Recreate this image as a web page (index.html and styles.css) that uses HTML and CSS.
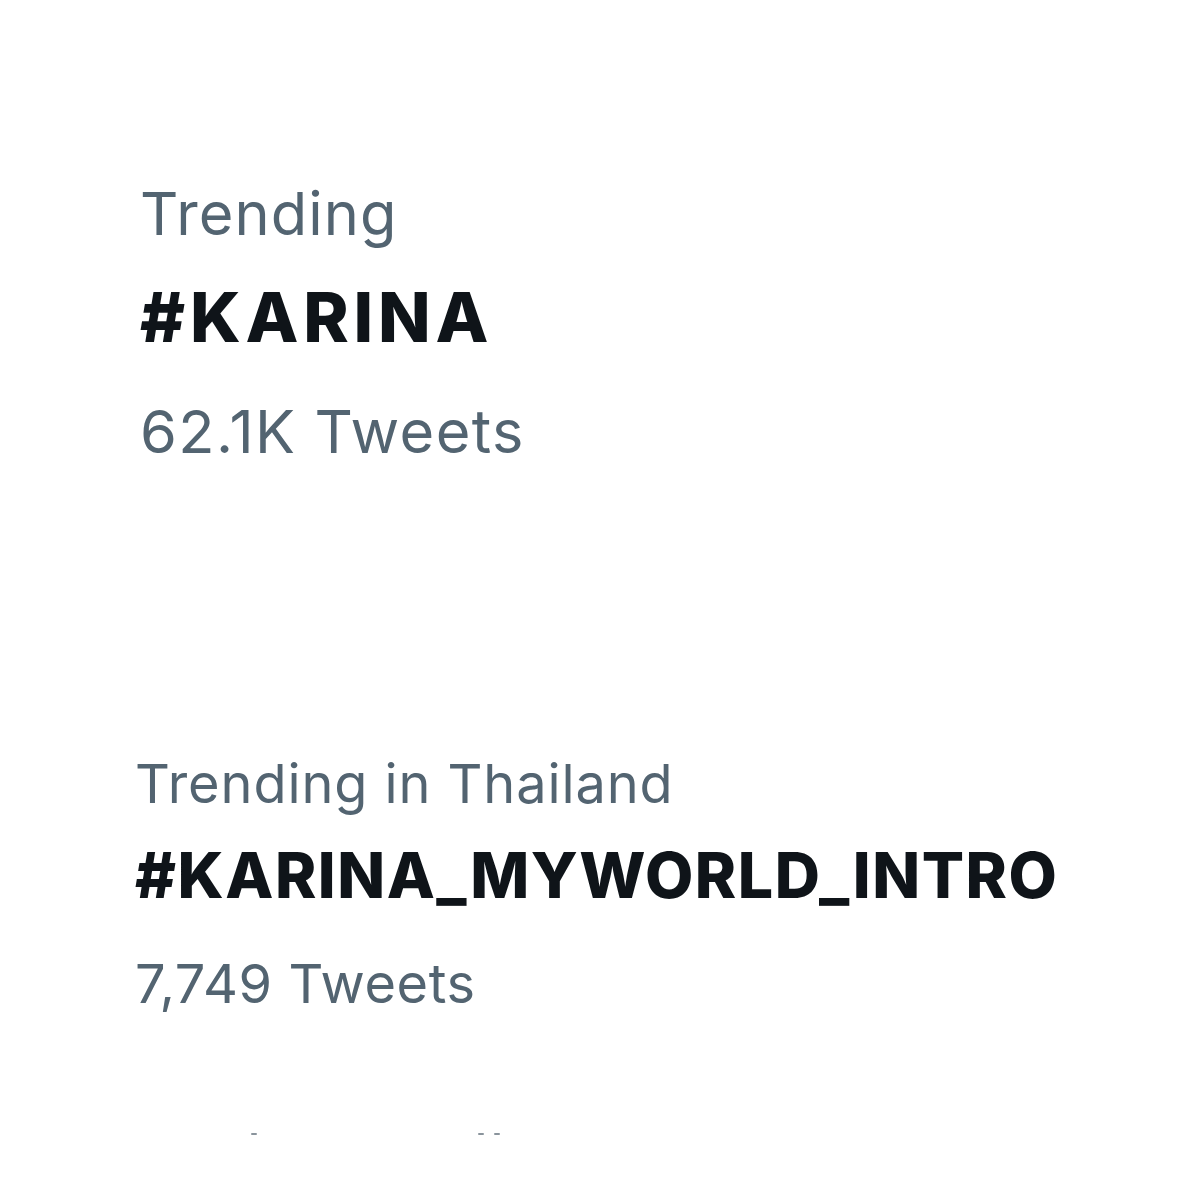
FILE: index.html
```html
<!DOCTYPE html>
<html lang="en">
<head>
	<meta charset="UTF-8">
	<title>Trends</title>
	<link rel="stylesheet" href="styles.css">
</head>
<body>
	<div class="trends">
		<div class="trend first">
			<div class="meta">Trending</div>
			<div class="name">#KARINA</div>
			<div class="count">62.1K Tweets</div>
		</div>
		<div class="trend second">
			<div class="meta">Trending in Thailand</div>
			<div class="name">#KARINA_MYWORLD_INTRO</div>
			<div class="count">7,749 Tweets</div>
		</div>
		<div class="cutoff">
			<span class="mark m1"></span>
			<span class="mark m2"></span>
			<span class="mark m3"></span>
		</div>
	</div>
</body>
</html>
```

FILE: styles.css
```css
body {
	margin: 0;
	padding: 0;
	background-color: #fff;
	font-family: Inter, "Noto Sans", sans-serif;
}
.trends {
	padding-top: 173px;
}
.trend {
	white-space: nowrap;
}
.meta, .count {
	color: #536471;
}
.name {
	color: #0f1419;
	font-weight: 800;
}
.first {
	padding-left: 140px;
}
.first .meta {
	font-size: 59.5px;
	line-height: 80px;
	letter-spacing: 1.1px;
}
.first .name {
	font-size: 68.8px;
	line-height: 128px;
	letter-spacing: 4.8px;
}
.first .count {
	font-size: 59.5px;
	line-height: 100px;
	letter-spacing: 1.4px;
}
.second {
	padding-left: 135px;
	margin-top: 266px;
}
.second .meta {
	font-size: 54.1px;
	line-height: 73px;
	letter-spacing: 0.9px;
}
.second .name {
	font-size: 62.6px;
	line-height: 111px;
	letter-spacing: 1.5px;
}
.second .count {
	font-size: 54.1px;
	line-height: 105px;
	letter-spacing: 0.6px;
}
.cutoff {
	display: flex;
	margin-top: 97px;
	height: 4px;
}
.mark {
	width: 6px;
	height: 2px;
	background-color: #8a949c;
	border-radius: 1px;
}
.m1 {
	margin-left: 251px;
}
.m2 {
	margin-left: 221px;
}
.m3 {
	margin-left: 10px;
}
```
